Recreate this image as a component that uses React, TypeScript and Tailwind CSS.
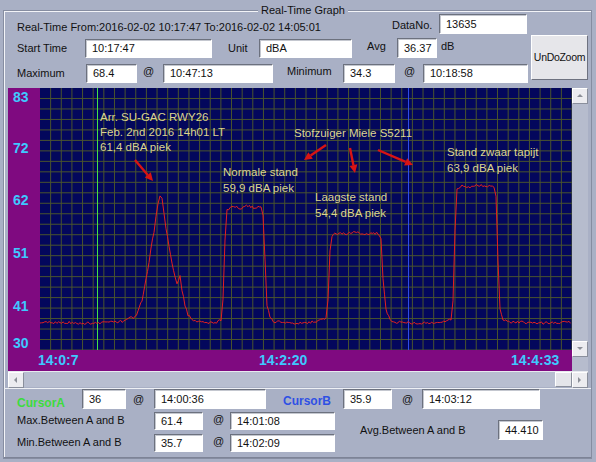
import React from "react";

const PW = 532;
const PH = 262;

// key points of the red trace, in page coordinates (plot starts at 40,88)
const keys: [number, number][] = [
  [40, 323], [60, 322], [80, 323], [100, 323], [115, 322], [125, 321], [130, 318], [135, 317],
  [138, 312], [142, 300], [146, 280], [149, 262], [151, 248], [154, 232], [156, 215], [158, 203],
  [160, 196], [162, 199], [164, 212], [166, 228], [169, 245], [172, 262], [175, 278], [177, 283],
  [180, 276], [182, 290], [185, 305], [188, 315], [192, 320], [200, 322], [215, 323], [221, 320],
  [223, 300], [225, 240], [227, 210], [232, 207], [240, 208], [248, 206], [255, 208], [261, 207],
  [263, 215], [265, 260], [267, 305], [270, 318], [275, 322], [300, 323], [315, 322], [322, 320],
  [326, 318], [328, 300], [330, 250], [332, 236], [336, 233], [345, 234], [355, 232], [365, 234],
  [378, 233], [381, 240], [383, 280], [386, 310], [390, 320], [395, 322], [420, 323], [445, 322],
  [451, 320], [453, 300], [455, 230], [457, 188], [462, 186], [470, 187], [478, 185], [486, 186],
  [494, 187], [496, 195], [498, 260], [500, 310], [503, 320], [510, 322], [540, 323], [572, 322],
];

function noise(i: number) {
  const s = Math.sin(i * 12.9898 + 3.1) * 43758.5453;
  return s - Math.floor(s) - 0.5;
}

function tracePoints() {
  const pts: string[] = [];
  let k = 0;
  for (let i = 0; i < keys.length - 1; i++) {
    const [x0, y0] = keys[i];
    const [x1, y1] = keys[i + 1];
    const steps = Math.max(1, Math.round((x1 - x0) / 1.5));
    for (let s = 0; s < steps; s++) {
      const t = s / steps;
      const x = x0 + (x1 - x0) * t - 40;
      const y = y0 + (y1 - y0) * t - 88 + noise(k++) * 2.6;
      pts.push(`${x.toFixed(1)},${y.toFixed(1)}`);
    }
  }
  return pts.join(" ");
}

function Arrow({ x1, y1, x2, y2 }: { x1: number; y1: number; x2: number; y2: number }) {
  const a = Math.atan2(y2 - y1, x2 - x1);
  const L = 8;
  const Wd = 4;
  const bx = x2 - L * Math.cos(a);
  const by = y2 - L * Math.sin(a);
  const p1 = `${bx + Wd * Math.sin(a)},${by - Wd * Math.cos(a)}`;
  const p2 = `${bx - Wd * Math.sin(a)},${by + Wd * Math.cos(a)}`;
  return (
    <g>
      <line x1={x1} y1={y1} x2={bx} y2={by} stroke="#d81414" strokeWidth={2.4} />
      <polygon points={`${x2},${y2} ${p1} ${p2}`} fill="#d81414" />
    </g>
  );
}

function Field({ w, value, h = "h-[19px]" }: { w: string; value: string; h?: string }) {
  return (
    <div
      className={`${w} ${h} shrink-0 bg-white border border-t-[#6c717e] border-l-[#6c717e] border-r-white border-b-white shadow-[inset_1px_1px_0_#c4c7cf] flex items-center pl-[6px] text-[11px] text-[#111]`}
    >
      {value}
    </div>
  );
}

function Tri({ dir }: { dir: "up" | "down" | "left" | "right" }) {
  const pts =
    dir === "up" ? "1,5 4,2 7,5" : dir === "down" ? "1,2 4,5 7,2" : dir === "left" ? "5,1 2,4 5,7" : "2,1 5,4 2,7";
  return (
    <svg width="8" height="8" viewBox="0 0 8 8">
      <polygon points={pts} fill="#8c8f98" />
    </svg>
  );
}

function SBtn({ dir }: { dir: "up" | "down" | "left" | "right" }) {
  return (
    <div className="w-[16px] h-[16px] shrink-0 bg-[#ececf0] border border-t-white border-l-white border-r-[#8a8f9c] border-b-[#8a8f9c] flex items-center justify-center">
      <Tri dir={dir} />
    </div>
  );
}

const ann = "#dcd58e";

function Plot() {
  const vl = Array.from({ length: 50 }, (_, i) => ((i + 1) * PW) / 50);
  const hl = Array.from({ length: 25 }, (_, i) => ((i + 1) * PH) / 25);
  return (
    <svg width={PW} height={PH} className="block bg-[#03075c]" fontFamily="'Liberation Sans', Arial, sans-serif">
      {vl.map((x) => (
        <line key={"v" + x} x1={x} y1={0} x2={x} y2={PH} stroke="#4a542e" strokeWidth={1} />
      ))}
      {hl.map((y) => (
        <line key={"h" + y} x1={0} y1={y} x2={PW} y2={y} stroke="#4a542e" strokeWidth={1} />
      ))}
      <line x1={57.5} y1={0} x2={57.5} y2={PH} stroke="#44e044" strokeWidth={1} />
      <line x1={368.5} y1={0} x2={368.5} y2={PH} stroke="#2e4ce8" strokeWidth={1} />
      <polyline points={tracePoints()} fill="none" stroke="#e42020" strokeWidth={1} />
      <Arrow x1={95} y1={72} x2={113} y2={93} />
      <Arrow x1={286} y1={57} x2={264} y2={72} />
      <Arrow x1={310} y1={60} x2={315} y2={85} />
      <Arrow x1={338} y1={62} x2={373} y2={77} />
      <g fill={ann} fontSize={11.5} dominantBaseline="central">
        <text x={60} y={29}>Arr. SU-GAC RWY26</text>
        <text x={60} y={44}>Feb. 2nd 2016 14h01 LT</text>
        <text x={60} y={59}>61,4 dBA piek</text>
        <text x={183} y={84}>Normale stand</text>
        <text x={183} y={100}>59,9 dBA piek</text>
        <text x={254} y={45}>Stofzuiger Miele S5211</text>
        <text x={275} y={109}>Laagste stand</text>
        <text x={275} y={125}>54,4 dBA piek</text>
        <text x={407} y={64}>Stand zwaar tapijt</text>
        <text x={407} y={80}>63,9 dBA piek</text>
      </g>
    </svg>
  );
}

export default function App() {
  const axis = "h-[14px] leading-[14px] text-[14px] font-bold text-[#3ec8ff]";
  return (
    <div className="w-[596px] h-[462px] overflow-hidden bg-[#a9b0c5] pt-[10px] pl-[3px] font-['Liberation_Sans',Arial,sans-serif] text-[11px] text-[#111]">
      <div className="relative w-[589px] h-[449px] border border-[#868da1] shadow-[inset_1px_1px_0_#f3f4f8]">
        <div className="absolute -top-[8px] left-[254px] px-[3px] bg-[#a9b0c5] leading-[14px]">Real-Time Graph</div>

        {/* row 1 */}
        <div className="mt-[3px] h-[20px] flex items-center">
          <span className="ml-[13px] w-[375px] self-end leading-[14px] whitespace-nowrap">
            Real-Time From:2016-02-02 10:17:47 To:2016-02-02 14:05:01
          </span>
          <span className="w-[47px] mt-[2px]">DataNo.</span>
          <Field w="w-[88px]" h="h-[20px]" value="13635" />
        </div>

        {/* rows 2 + 3 with button */}
        <div className="mt-[1px] h-[48px] flex">
          <div className="w-[527px]">
            <div className="mt-[3px] h-[20px] flex items-center">
              <span className="ml-[13px] w-[68px] shrink-0">Start Time</span>
              <Field w="w-[127px]" value="10:17:47" />
              <span className="ml-[16px] w-[31px] shrink-0">Unit</span>
              <Field w="w-[93px]" value="dBA" />
              <span className="ml-[15px] w-[30px] shrink-0 -mt-[3px]">Avg</span>
              <Field w="w-[40px]" value="36.37" h="h-[20px]" />
              <span className="ml-[4px] -mt-[3px]">dB</span>
            </div>
            <div className="mt-[5px] h-[20px] flex items-center">
              <span className="ml-[13px] w-[69px] shrink-0">Maximum</span>
              <Field w="w-[51px]" value="68.4" />
              <span className="ml-[6px] w-[20px] shrink-0 -mt-[3px]">@</span>
              <Field w="w-[110px]" value="10:47:13" />
              <span className="ml-[14px] w-[56px] shrink-0 -mt-[3px]">Minimum</span>
              <Field w="w-[52px]" value="34.3" />
              <span className="ml-[9px] w-[19px] shrink-0 -mt-[3px]">@</span>
              <Field w="w-[105px]" value="10:18:58" />
            </div>
          </div>
          <div className="w-[57px] h-[45px] bg-[#e6e6ea] border border-t-white border-l-white border-r-[#6e7280] border-b-[#6e7280] flex items-center justify-center text-[10.5px] tracking-[-0.3px] whitespace-nowrap">
            UnDoZoom
          </div>
        </div>

        {/* chart */}
        <div className="mt-[5px] ml-[4px] flex">
          <div className="w-[564px]">
            <div className="h-[262px] flex">
              <div className="w-[32px] bg-[#7f0a80] flex flex-col pl-[5px] pt-[2px]">
                <div className={axis}>83</div>
                <div className={`${axis} mt-[37px]`}>72</div>
                <div className={`${axis} mt-[38px]`}>62</div>
                <div className={`${axis} mt-[39px]`}>51</div>
                <div className={`${axis} mt-[39px]`}>41</div>
                <div className={`${axis} mt-[23px]`}>30</div>
              </div>
              <Plot />
            </div>
            <div className="h-[21px] bg-[#7f0a80] flex items-center text-[14px] font-bold text-[#3ec8ff]">
              <span className="ml-[30px] w-[221px]">14:0:7</span>
              <span className="w-[252px]">14:2:20</span>
              <span>14:4:33</span>
            </div>
          </div>
          <div className="w-[16px] h-[283px] bg-[#b6bccd] flex flex-col justify-between">
            <SBtn dir="up" />
            <div className="mb-[14px]">
              <SBtn dir="down" />
            </div>
          </div>
        </div>
        <div className="ml-[4px] w-[580px] h-[16px] flex bg-[#b8bed0] border-t border-[#e8eaf0]">
          <SBtn dir="left" />
          <div className="flex-1" />
          <div className="w-[17px] h-[15px] bg-[#e4e5ea] border border-t-white border-l-white border-r-[#8a8f9c] border-b-[#8a8f9c]" />
          <SBtn dir="right" />
        </div>

        {/* lower panel */}
        <div className="mt-[1px] h-[70px] border-t border-t-[#eef0f5] border-b border-b-[#7d8396]">
          <div className="h-[20px] flex items-center">
            <span className="ml-[13px] w-[65px] shrink-0 mt-[8px] text-[12px] font-bold text-[#3ddc3d]">CursorA</span>
            <Field w="w-[44px]" h="h-[20px]" value="36" />
            <span className="ml-[7px] w-[21px] shrink-0">@</span>
            <Field w="w-[112px]" h="h-[20px]" value="14:00:36" />
            <span className="ml-[17px] w-[60px] shrink-0 mt-[4px] text-[12px] font-bold text-[#2f50e4]">CursorB</span>
            <Field w="w-[49px]" h="h-[20px]" value="35.9" />
            <span className="ml-[10px] w-[20px] shrink-0">@</span>
            <Field w="w-[118px]" h="h-[20px]" value="14:03:12" />
          </div>
          <div className="flex">
            <div>
              <div className="mt-[3px] h-[18px] flex items-center">
                <span className="ml-[13px] w-[137px] shrink-0 -mt-[2px]">Max.Between A and B</span>
                <Field w="w-[49px]" h="h-[18px]" value="61.4" />
                <span className="ml-[10px] w-[17px] shrink-0 -mt-[3px]">@</span>
                <Field w="w-[105px]" h="h-[18px]" value="14:01:08" />
              </div>
              <div className="mt-[4px] h-[18px] flex items-center">
                <span className="ml-[13px] w-[137px] shrink-0 -mt-[2px]">Min.Between A and B</span>
                <Field w="w-[49px]" h="h-[18px]" value="35.7" />
                <span className="ml-[10px] w-[17px] shrink-0 -mt-[3px]">@</span>
                <Field w="w-[105px]" h="h-[18px]" value="14:02:09" />
              </div>
            </div>
            <div className="ml-[25px] mt-[11px] h-[20px] flex items-center">
              <span className="w-[138px] shrink-0">Avg.Between A and B</span>
              <Field w="w-[45px]" h="h-[20px]" value="44.410" />
            </div>
          </div>
        </div>
      </div>
    </div>
  );
}
